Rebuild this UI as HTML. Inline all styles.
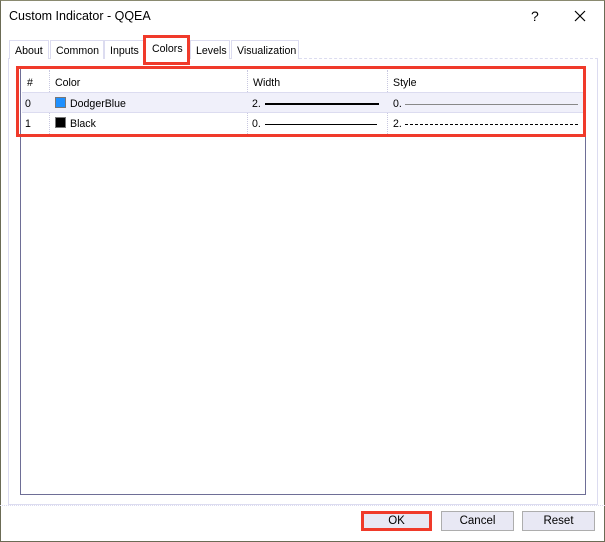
<!DOCTYPE html>
<html><head><meta charset="utf-8"><style>
*{margin:0;padding:0;box-sizing:border-box}
body{width:605px;height:542px;background:#fff;font-family:"Liberation Sans",sans-serif;font-size:10.6px;color:#000;position:relative;overflow:hidden}
.a{position:absolute}
.win{left:0;top:0;width:605px;height:542px;border:1px solid #6b6b55;border-top:1px solid #8a8a70}
.tab{top:40px;height:19px;border:1px solid #dcdcf0;border-bottom:none;padding:4px 0 0 5px;background:#fff}
.cell{position:absolute;border-right:1px dotted #c8c8e0;padding-left:5px}
.btn{top:511px;height:20px;border:1px solid #adadad;background:#e8e8f4;text-align:center;line-height:19px;font-size:11.5px}
</style></head><body>
<div class="a win"></div>
<div class="a" style="left:9px;top:9px;font-size:12.5px">Custom Indicator - QQEA</div>
<div class="a" style="left:531px;top:8px;font-size:14px">?</div>
<svg class="a" style="left:574px;top:10px" width="12" height="12"><path d="M1 1L11 11M11 1L1 11" stroke="#000" stroke-width="1.2"/></svg>

<div class="a" style="left:8px;top:58px;width:590px;height:447px;border:1px solid #dcdcf0;border-top:1px dashed #dcdcf0"></div>
<div class="a tab" style="left:9px;width:40px">About</div>
<div class="a tab" style="left:50px;width:54px">Common</div>
<div class="a tab" style="left:104px;width:40px">Inputs</div>
<div class="a tab" style="left:190px;width:40px">Levels</div>
<div class="a tab" style="left:231px;width:68px">Visualization</div>
<div class="a" style="left:143px;top:35px;width:47px;height:30px;border:3px solid #f03a2a;background:#fff;padding:5px 0 0 6px">Colors</div>

<div class="a" style="left:20px;top:68px;width:566px;height:427px;border:1px solid #6e6e96;background:#fff"></div>
<div class="a" style="left:22px;top:70px;width:562px;height:64px">
 <div class="a" style="left:0;top:0;width:562px;height:23px;border-bottom:1px solid #dcdcf0"></div>
 <div class="cell" style="left:0;top:0;width:28px;height:64px;padding-top:7px">#</div>
 <div class="cell" style="left:28px;top:0;width:198px;height:64px;padding-top:7px">Color</div>
 <div class="cell" style="left:226px;top:0;width:140px;height:64px;padding-top:7px">Width</div>
 <div class="a" style="left:371px;top:7px">Style</div>
 <div class="a" style="left:0;top:23px;width:562px;height:20px;background:#f0f0fa;border-bottom:1px solid #dcdcf0"></div>
 <div class="a" style="left:3px;top:28px">0</div>
 <div class="a" style="left:33px;top:27px;width:11px;height:11px;background:#1e90ff;border:1px solid #777"></div>
 <div class="a" style="left:48px;top:28px">DodgerBlue</div>
 <div class="a" style="left:230px;top:28px">2.</div>
 <div class="a" style="left:243px;top:33px;width:114px;height:2px;background:#000"></div>
 <div class="a" style="left:371px;top:28px">0.</div>
 <div class="a" style="left:383px;top:34px;width:173px;height:1px;background:#888"></div>
 <div class="a" style="left:3px;top:48px">1</div>
 <div class="a" style="left:33px;top:47px;width:11px;height:11px;background:#000;border:1px solid #777"></div>
 <div class="a" style="left:48px;top:48px">Black</div>
 <div class="a" style="left:230px;top:48px">0.</div>
 <div class="a" style="left:243px;top:54px;width:112px;height:1px;background:#000"></div>
 <div class="a" style="left:371px;top:48px">2.</div>
 <div class="a" style="left:383px;top:54px;width:173px;height:0;border-top:1px dashed #000"></div>
</div>
<div class="a" style="left:16px;top:66px;width:570px;height:71px;border:3px solid #f03a2a"></div>

<div class="a" style="left:0;top:505px;width:605px;border-top:1px dotted #dcdcf0"></div>
<div class="a btn" style="left:361px;width:71px;border:3px solid #f03a2a;line-height:15px">OK</div>
<div class="a btn" style="left:441px;width:73px">Cancel</div>
<div class="a btn" style="left:522px;width:73px">Reset</div>
</body></html>
